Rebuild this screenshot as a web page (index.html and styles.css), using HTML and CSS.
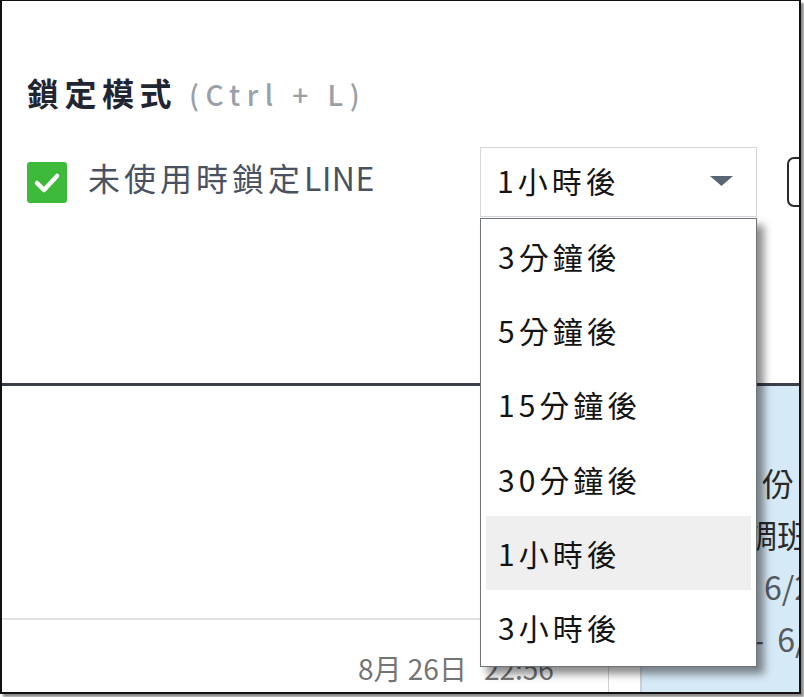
FILE: index.html
```html
<!DOCTYPE html>
<html lang="zh-Hant">
<head>
<meta charset="utf-8">
<title>鎖定模式</title>
<link rel="stylesheet" href="styles.css">
</head>
<body>
<div class="frame">
  <section class="settings">
    <div class="title"><span class="title-main">鎖定模式</span><span class="title-key">(Ctrl + L)</span></div>
    <div class="row">
      <span class="checkbox">
        <svg width="40" height="41" viewBox="0 0 40 41"><path d="M10 21 L17 28 L30 14" fill="none" stroke="#fff" stroke-width="4.5" stroke-linecap="round" stroke-linejoin="round"/></svg>
      </span>
      <span class="check-label">未使用時鎖定<span class="latin">LINE</span></span>
      <div class="select">
        <span class="select-value">1小時後</span>
        <svg class="caret" width="23" height="10" viewBox="0 0 23 10"><polygon points="0,0 23,0 11.5,10" fill="#5b6673"/></svg>
      </div>
      <span class="side-btn"></span>
    </div>
  </section>
  <section class="lower">
    <div class="left-pane">
      <div class="left-top"></div>
      <div class="left-bottom"><span>8月 26日</span><span class="time">22:56</span></div>
    </div>
    <div class="gutter"></div>
    <div class="blue">
      <div class="bl l1">月份</div>
      <div class="bl l2">調班</div>
      <div class="bl l3">6/27</div>
      <div class="bl l4">- 6/28</div>
    </div>
  </section>
  <ul class="dropdown">
    <li>3分鐘後</li>
    <li>5分鐘後</li>
    <li>15分鐘後</li>
    <li>30分鐘後</li>
    <li class="active">1小時後</li>
    <li>3小時後</li>
  </ul>
</div>
</body>
</html>
```

FILE: styles.css
```css
html, body {
  margin: 0;
  padding: 0;
  background: #ffffff;
}
body {
  width: 804px;
  height: 697px;
  overflow: hidden;
  font-family: "Noto Sans CJK TC", "Noto Sans", sans-serif;
}
.frame {
  position: relative;
  box-sizing: border-box;
  width: 801px;
  height: 694px;
  border-style: solid;
  border-color: #111111;
  border-width: 1px 2px 2px 2px;
  box-shadow: 3px 3px 2px rgba(0, 0, 0, 0.45);
  overflow: hidden;
  background: #ffffff;
}
.settings {
  box-sizing: border-box;
  height: 385px;
  padding: 71px 0 0 25px;
  border-bottom: 3px solid #3a3f49;
  overflow: hidden;
}
.title {
  display: flex;
  align-items: baseline;
  height: 40px;
  line-height: 40px;
  white-space: nowrap;
}
.title-main {
  font-size: 32px;
  font-weight: bold;
  letter-spacing: 5.5px;
  color: #1f2531;
}
.title-key {
  margin-left: 12px;
  font-size: 28px;
  font-weight: 500;
  letter-spacing: 6.5px;
  color: #9aa0a8;
}
.row {
  display: flex;
  align-items: center;
  height: 70px;
  margin-top: 35px;
}
.row > * {
  flex-shrink: 0;
}
.checkbox {
  display: block;
  width: 40px;
  height: 41px;
  border-radius: 3px;
  background: #3eba3b;
}
.checkbox svg {
  display: block;
}
.check-label {
  width: 392px;
  margin-left: 21px;
  margin-bottom: 11px;
  font-size: 32px;
  line-height: 40px;
  letter-spacing: 4px;
  color: #4a5262;
  white-space: nowrap;
}
.latin {
  letter-spacing: 0.5px;
}
.select {
  box-sizing: border-box;
  display: flex;
  align-items: center;
  width: 277px;
  height: 70px;
  padding-left: 16px;
  border: 1px solid #d3d6da;
  background: #ffffff;
}
.select-value {
  font-size: 30px;
  letter-spacing: 4px;
  color: #141414;
  margin-bottom: 4px;
}
.caret {
  display: block;
  margin-left: auto;
  margin-right: 23px;
  margin-top: -3px;
}
.side-btn {
  display: block;
  box-sizing: border-box;
  width: 40px;
  height: 50px;
  margin-left: 30px;
  border: 2px solid #2a2a2a;
  border-radius: 7px;
}
.lower {
  display: flex;
  height: 306px;
}
.left-pane {
  flex: 0 0 auto;
  display: flex;
  flex-direction: column;
  width: 606px;
  border-right: 1px solid #d0d0d0;
}
.left-top {
  height: 232px;
  border-bottom: 2px solid #e2e2e2;
}
.left-bottom {
  padding: 28px 0 0 356px;
  font-size: 28px;
  line-height: 40px;
  color: #747474;
  white-space: nowrap;
}
.time {
  margin-left: 17px;
}
.gutter {
  flex: 0 0 auto;
  width: 31px;
  border-right: 2px solid #cbd0d4;
}
.blue {
  flex: 1 1 0;
  min-width: 0;
  overflow: hidden;
  padding-top: 70px;
  background: #d6e9f6;
}
.bl {
  height: 52px;
  line-height: 52px;
  font-size: 32px;
  white-space: nowrap;
  color: #2a2a2a;
}
.l1 {
  padding-left: 88px;
}
.l2 {
  padding-left: 103px;
}
.l3 {
  padding-left: 122px;
  color: #555a60;
}
.l4 {
  padding-left: 111px;
  word-spacing: 6px;
  color: #555a60;
}
.dropdown {
  position: absolute;
  left: 478px;
  top: 217px;
  box-sizing: border-box;
  width: 277px;
  height: 449px;
  margin: 0;
  padding: 0 5px 2px 5px;
  list-style: none;
  border: 1px solid #6f7378;
  background: #ffffff;
  box-shadow: 7px 7px 8px rgba(0, 0, 0, 0.45);
}
.dropdown li {
  height: 74.2px;
  line-height: 74px;
  padding-left: 12px;
  font-size: 30px;
  letter-spacing: 4px;
  color: #141414;
}
.dropdown li.active {
  background: #efefef;
}
```
